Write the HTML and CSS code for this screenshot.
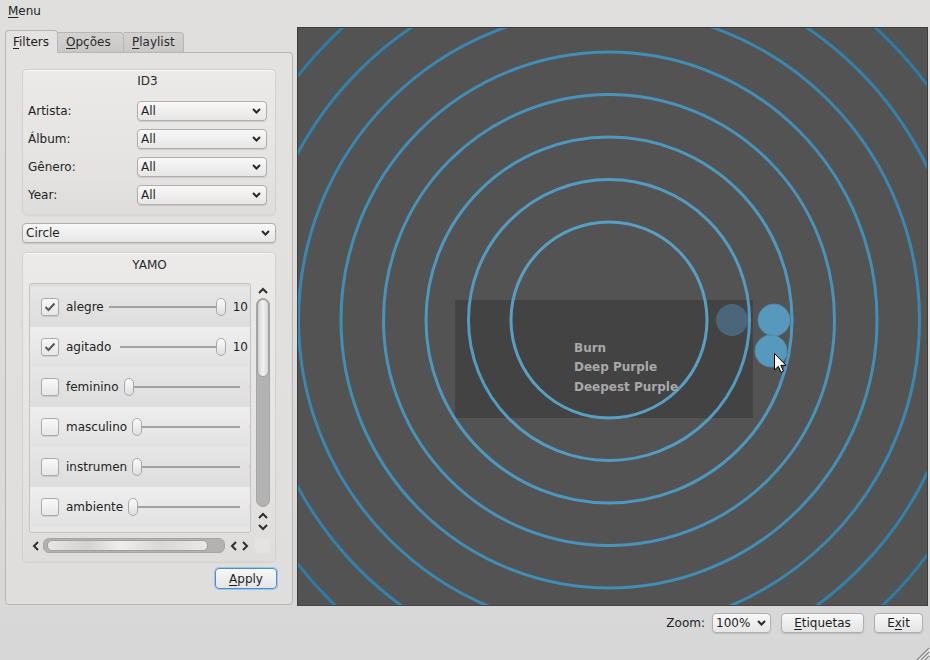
FILE: index.html
```html
<!DOCTYPE html>
<html>
<head>
<meta charset="utf-8">
<link rel="stylesheet" href="styles.css">
</head>
<body>
<div class="menubar"><span><u>M</u>enu</span></div>
<div class="main">
  <div class="left">
    <div class="tabs">
      <div class="tab active"><u>F</u>ilters</div>
      <div class="tab t2"><u>O</u>pções</div>
      <div class="tab t3"><u>P</u>laylist</div>
    </div>
    <div class="panel">
      <div class="group id3">
        <div class="gtitle">ID3</div>
        <div class="frow first"><span class="flabel">Artista:</span><div class="combo"><span>All</span><svg class="chev" width="9" height="6" viewBox="0 0 9 6"><path d="M1 1 L4.5 4.5 L8 1" fill="none" stroke="#2a2a2a" stroke-width="2"/></svg></div></div>
        <div class="frow"><span class="flabel">Álbum:</span><div class="combo"><span>All</span><svg class="chev" width="9" height="6" viewBox="0 0 9 6"><path d="M1 1 L4.5 4.5 L8 1" fill="none" stroke="#2a2a2a" stroke-width="2"/></svg></div></div>
        <div class="frow"><span class="flabel">Gênero:</span><div class="combo"><span>All</span><svg class="chev" width="9" height="6" viewBox="0 0 9 6"><path d="M1 1 L4.5 4.5 L8 1" fill="none" stroke="#2a2a2a" stroke-width="2"/></svg></div></div>
        <div class="frow"><span class="flabel">Year:</span><div class="combo"><span>All</span><svg class="chev" width="9" height="6" viewBox="0 0 9 6"><path d="M1 1 L4.5 4.5 L8 1" fill="none" stroke="#2a2a2a" stroke-width="2"/></svg></div></div>
      </div>
      <div class="combo wide"><span>Circle</span><svg class="chev" width="9" height="6" viewBox="0 0 9 6"><path d="M1 1 L4.5 4.5 L8 1" fill="none" stroke="#2a2a2a" stroke-width="2"/></svg></div>
      <div class="group yamo">
        <div class="gtitle">YAMO</div>
        <div class="scrollarea">
          <div class="viewport">
            <div class="row v10"><span class="cb"><svg width="12" height="10" viewBox="0 0 12 10"><path d="M1.5 5 L4.5 8 L10.5 1.5" fill="none" stroke="#5a5a5a" stroke-width="2"/></svg></span><span class="rlabel">alegre</span><div class="slider max"><span class="handle"></span></div><span class="val">10</span></div>
            <div class="row v10"><span class="cb"><svg width="12" height="10" viewBox="0 0 12 10"><path d="M1.5 5 L4.5 8 L10.5 1.5" fill="none" stroke="#5a5a5a" stroke-width="2"/></svg></span><span class="rlabel">agitado</span><div class="slider max wide-gap"><span class="handle"></span></div><span class="val">10</span></div>
            <div class="row v0"><span class="cb"></span><span class="rlabel">feminino</span><div class="slider"><span class="handle"></span></div><span class="val">0</span></div>
            <div class="row v0"><span class="cb"></span><span class="rlabel">masculino</span><div class="slider"><span class="handle"></span></div><span class="val">0</span></div>
            <div class="row v0"><span class="cb"></span><span class="rlabel">instrumental</span><div class="slider"><span class="handle"></span></div><span class="val">0</span></div>
            <div class="row v0"><span class="cb"></span><span class="rlabel">ambiente</span><div class="slider"><span class="handle"></span></div><span class="val">0</span></div>
            <div class="row v0"><span class="cb"></span><span class="rlabel">dançante</span><div class="slider"><span class="handle"></span></div><span class="val">0</span></div>
          </div>
          <div class="vscroll">
            <div class="arr top"><svg width="10" height="7" viewBox="0 0 10 7"><path d="M1 6 L5 2 L9 6" fill="none" stroke="#2e2e2e" stroke-width="2"/></svg></div>
            <div class="vtrack"><div class="vhandle"></div></div>
            <div class="arr"><svg width="10" height="7" viewBox="0 0 10 7"><path d="M1 6 L5 2 L9 6" fill="none" stroke="#2e2e2e" stroke-width="2"/></svg></div>
            <div class="arr"><svg width="10" height="7" viewBox="0 0 10 7"><path d="M1 1 L5 5 L9 1" fill="none" stroke="#2e2e2e" stroke-width="2"/></svg></div>
          </div>
          <div class="hscroll">
            <div class="harr"><svg width="7" height="10" viewBox="0 0 7 10"><path d="M6 1 L2 5 L6 9" fill="none" stroke="#2e2e2e" stroke-width="2"/></svg></div>
            <div class="htrack"><div class="hhandle"></div></div>
            <div class="harr"><svg width="7" height="10" viewBox="0 0 7 10"><path d="M6 1 L2 5 L6 9" fill="none" stroke="#2e2e2e" stroke-width="2"/></svg></div>
            <div class="harr"><svg width="7" height="10" viewBox="0 0 7 10"><path d="M1 1 L5 5 L1 9" fill="none" stroke="#2e2e2e" stroke-width="2"/></svg></div>
          </div>
          <div class="corner"></div>
        </div>
      </div>
      <div class="actions"><button class="btn focus apply"><u>A</u>pply</button></div>
    </div>
  </div>
  <div class="canvas">
    <svg width="629" height="577" viewBox="0 0 629 577">
      <rect x="157" y="272" width="298" height="118" fill="#000" fill-opacity="0.19"/>
      <g fill="none" stroke-width="3">
        <circle cx="311" cy="292" r="98" stroke="#56a0c4"/>
        <circle cx="311" cy="292" r="140.5" stroke="#529cc1"/>
        <circle cx="311" cy="292" r="183" stroke="#4d98be"/>
        <circle cx="311" cy="292" r="225.5" stroke="#4793ba"/>
        <circle cx="311" cy="292" r="268" stroke="#418eb6"/>
        <circle cx="311" cy="292" r="310.5" stroke="#3a88b1"/>
        <circle cx="311" cy="292" r="353" stroke="#3382ab"/>
        <circle cx="311" cy="292" r="395.5" stroke="#2d7ca6"/>
        <circle cx="311" cy="292" r="438" stroke="#2876a1"/>
        <circle cx="311" cy="292" r="480.5" stroke="#24709c"/>
      </g>
      <circle cx="434" cy="292" r="16" fill="#4a6678"/>
      <circle cx="476" cy="292" r="16" fill="#5799bc" stroke="#4d8db0" stroke-width="1"/>
      <circle cx="473" cy="323" r="16" fill="#5799bc" stroke="#4d8db0" stroke-width="1"/>
      <g font-family="DejaVu Sans, sans-serif" font-weight="bold" font-size="12" fill="#a9a9a9">
        <text x="276" y="324">Burn</text>
        <text x="276" y="343">Deep Purple</text>
        <text x="276" y="363">Deepest Purple</text>
      </g>
      <path d="M476.5 325.5 L476.5 342 L480.3 338.3 L483 344.3 L485.5 343.1 L482.8 337.3 L488 337.3 Z" fill="#fff" stroke="#000" stroke-width="1" stroke-linejoin="round"/>
    </svg>
  </div>
</div>
<div class="bottombar">
  <div class="zoom"><span>Zoom:</span><div class="combo zcombo"><span>100%</span><svg class="chev" width="9" height="6" viewBox="0 0 9 6"><path d="M1 1 L4.5 4.5 L8 1" fill="none" stroke="#2a2a2a" stroke-width="2"/></svg></div></div>
  <button class="btn etiq"><u>E</u>tiquetas</button>
  <button class="btn exit">E<u>x</u>it</button>
</div>
<svg class="grip" width="22" height="16" viewBox="0 0 22 16">
  <path d="M21 4 L9 16 M21 8 L13 16 M21 12 L17 16" stroke="#8a8a8a" stroke-width="1.2"/>
  <path d="M22 5 L11 16 M22 9 L15 16 M22 13 L19 16" stroke="#f4f4f4" stroke-width="0.8"/>
</svg>
</body>
</html>
```

FILE: styles.css
```css
* { box-sizing: border-box; }

body {
  margin: 0;
  width: 930px;
  height: 660px;
  overflow: hidden;
  position: relative;
  font-family: "DejaVu Sans", sans-serif;
  font-size: 12px;
  color: #232323;
  background: linear-gradient(#e0dfde 0, #dddcdb 300px, #d7d7d7 660px);
}

u { text-decoration: underline; text-underline-offset: 2px; }

.menubar {
  height: 22px;
  padding-left: 8px;
  display: flex;
  align-items: center;
}

.main {
  display: flex;
  padding-top: 5px;
  height: 584px;
}

.left {
  margin-left: 5px;
  width: 288px;
  padding-top: 3px;
  display: flex;
  flex-direction: column;
}

.tabs {
  display: flex;
  height: 22px;
  align-items: flex-start;
  position: relative;
  z-index: 1;
}

.tab {
  margin-top: 2px;
  height: 20px;
  line-height: 16px;
  padding: 1px 0 0 8px;
  background: linear-gradient(#d3d2d1, #c9c8c7);
  border: 1px solid #b7b6b5;
  border-bottom: none;
  border-left: none;
  border-radius: 0 4px 0 0;
  color: #2a2a2a;
}

.tab.active {
  margin-top: 0;
  width: 53px;
  height: 23px;
  padding: 3px 0 0 7px;
  background: #e3e2e1;
  border-left: 1px solid #b7b6b5;
  border-radius: 4px 4px 0 0;
  color: #1e1e1e;
}

.tab.t2 { width: 66px; }
.tab.t3 { width: 60px; }

.panel {
  height: 553px;
  border: 1px solid #b7b6b5;
  border-radius: 0 4px 4px 4px;
  background: linear-gradient(#e3e2e1, #dfdedd);
  padding: 16px 16px 0 16px;
  display: flex;
  flex-direction: column;
}

.group {
  border-radius: 5px;
  border: 1px solid #d2d1d0;
  border-bottom-color: #d9d8d7;
  background: linear-gradient(#ebeae9, #e4e3e2 70%, #dedddc);
  box-shadow: inset 0 1px 0 rgba(255,255,255,0.7), 0 1px 1px rgba(0,0,0,0.06);
}

.gtitle {
  text-align: center;
  line-height: 16px;
  height: 16px;
  color: #2a2a2a;
}

.id3 {
  height: 146px;
  padding: 3px 8px 0 5px;
}

.frow {
  display: flex;
  align-items: center;
  height: 20px;
  margin-top: 8px;
}
.frow.first { margin-top: 12px; }

.flabel { width: 109px; }

.combo {
  width: 130px;
  height: 20px;
  border: 1px solid #b0afae;
  border-radius: 4px;
  background: linear-gradient(#f8f8f8, #e6e6e6);
  box-shadow: 0 1px 1px rgba(0,0,0,0.12);
  display: flex;
  align-items: center;
  justify-content: space-between;
  padding: 0 5px 0 3px;
  color: #1e1e1e;
}

.combo.wide {
  width: 254px;
  margin-top: 8px;
  flex: none;
}

.yamo {
  margin-top: 9px;
  height: 310px;
  flex: none;
  padding: 4px 5px 0 6px;
}

.scrollarea {
  margin-top: 10px;
  display: grid;
  grid-template-columns: 222px 15px;
  grid-template-rows: 250px 15px;
  column-gap: 4px;
  row-gap: 5px;
}

.viewport {
  border: 1px solid #c4c3c2;
  border-radius: 3px;
  overflow: hidden;
  background: #dedede;
  padding-top: 3px;
}

.row {
  width: 232px;
  height: 40px;
  display: flex;
  align-items: center;
  padding-left: 11px;
  background: linear-gradient(#e6e6e6, #dddddd);
}
.row:nth-child(even) { background: linear-gradient(#eeeeee, #e2e2e2); }

.cb {
  width: 18px;
  height: 18px;
  flex: none;
  border: 1px solid #acabaa;
  border-radius: 3px;
  background: linear-gradient(#f8f8f8, #e7e7e7);
  box-shadow: 0 1px 1px rgba(0,0,0,0.1);
  display: flex;
  align-items: center;
  justify-content: center;
}

.rlabel {
  margin-left: 7px;
  max-width: 61px;
  overflow: hidden;
  white-space: nowrap;
  flex: none;
}

.slider {
  flex: 1;
  margin-left: 5px;
  height: 20px;
  display: flex;
  align-items: center;
  background: linear-gradient(#a2a2a2, #a2a2a2) no-repeat center / 100% 2px;
}
.slider.max { justify-content: flex-end; }
.slider.wide-gap { margin-left: 9px; }

.handle {
  width: 10px;
  height: 18px;
  border: 1px solid #a9a9a9;
  border-radius: 5px;
  background: linear-gradient(#fbfbfb, #dfdfdf);
}

.val { flex: none; color: #1e1e1e; }
.row.v10 .val { margin-left: 7px; margin-right: 14px; }
.row.v0 .val { margin-left: 9px; margin-right: 5px; }

.vscroll {
  display: flex;
  flex-direction: column;
  align-items: center;
}

.arr {
  height: 12px;
  display: flex;
  align-items: center;
  justify-content: center;
  flex: none;
}
.arr.top { height: 14px; }

.vtrack {
  flex: 1;
  width: 14px;
  border-radius: 7px;
  background: #b2b2b2;
  border: 1px solid #a6a6a6;
  margin: 1px 0 2px;
}

.vhandle {
  height: 78px;
  border-radius: 6px;
  border: 1px solid #a0a0a0;
  background: linear-gradient(90deg, #d2d2d2, #f2f2f2 50%, #d6d6d6);
}

.hscroll {
  display: flex;
  align-items: center;
}

.harr {
  width: 12px;
  height: 15px;
  display: flex;
  align-items: center;
  justify-content: center;
  flex: none;
}
.harr:first-child { width: 13px; margin-right: 1px; }

.htrack {
  width: 184px;
  height: 15px;
  border-radius: 6px;
  background: #b2b2b2;
  border: 1px solid #a6a6a6;
  padding: 1px 0 0 3px;
  margin-right: 2px;
}

.hhandle {
  width: 161px;
  height: 11px;
  border-radius: 5px;
  border: 1px solid #a0a0a0;
  background: linear-gradient(90deg, #e6e6e6, #d2d2d2 25%, #eeeeee 45%, #d8d8d8 70%, #e8e8e8);
}

.corner { background: #e3e3e3; }

.actions {
  display: flex;
  justify-content: flex-end;
  margin-top: 6px;
  margin-right: -1px;
}

.btn {
  height: 20px;
  border: 1px solid #b0afae;
  border-radius: 4px;
  background: linear-gradient(#f8f8f8, #e4e4e4);
  box-shadow: 0 1px 1px rgba(0,0,0,0.14);
  font-family: "DejaVu Sans", sans-serif;
  font-size: 12px;
  color: #1e1e1e;
  padding: 0;
}

.btn.apply {
  width: 62px;
  height: 21px;
}

.btn.focus {
  border: 1px solid #4b8fd3;
  box-shadow: 0 0 0 1px #9cc3ea;
}

.canvas {
  margin-left: 4px;
  width: 631px;
  height: 579px;
  border: 1px solid #3c3c3c;
  border-bottom-color: #454545;
  background: #535353;
  overflow: hidden;
}
.canvas svg { display: block; }

.bottombar {
  height: 54px;
  display: flex;
  justify-content: flex-end;
  align-items: flex-start;
  padding: 7px 7px 0 0;
  gap: 10px;
}

.zoom {
  display: flex;
  align-items: center;
  gap: 7px;
  height: 20px;
}

.combo.zcombo { width: 59px; padding: 0 4px 0 3px; }
.btn.etiq { width: 83px; }
.btn.exit { width: 49px; }

.grip {
  position: absolute;
  right: 0;
  bottom: 0;
}
```
